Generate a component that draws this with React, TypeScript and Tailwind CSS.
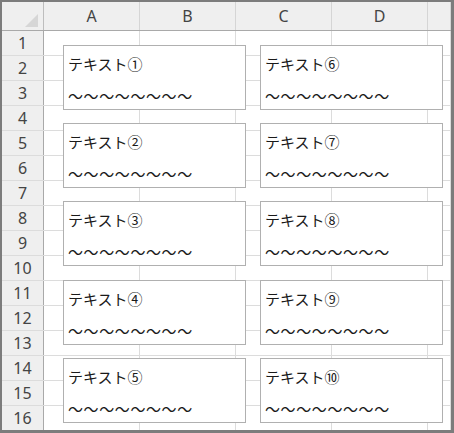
import React from "react";

const cols = ["A", "B", "C", "D", ""];
const rows = Array.from({ length: 16 }, (_, i) => i + 1);

const left = ["①", "②", "③", "④", "⑤"];
const right = ["⑥", "⑦", "⑧", "⑨", "⑩"];
const tops = [45, 123, 201, 280, 358];

function Box({ x, y, label }: { x: number; y: number; label: string }) {
  return (
    <div
      className="absolute w-[183px] h-[65px] bg-white border border-[#b0b0b0] pl-[4px] flex flex-col text-[15px] text-[#1a1a1a] leading-none"
      style={{ left: x, top: y, fontFamily: '"Noto Sans CJK JP", sans-serif' }}
    >
      <div className="mt-[8px] h-[18px] flex items-center">テキスト{label}</div>
      <div className="mt-[14px] h-[18px] flex items-center tracking-[0.6px]">〜〜〜〜〜〜〜〜</div>
    </div>
  );
}

export default function App() {
  return (
    <div className="w-[454px] h-[433px] bg-white">
      <div className="relative w-[454px] h-[433px] border-t-2 border-l-2 border-r-[3px] border-b-[3px] border-[#7c7c7c] overflow-hidden bg-white">
        <div className="flex h-[29px] border-b border-[#a9a9a9] bg-[#efefef]">
          <div className="relative w-[42px] shrink-0 border-r border-[#bdbdbd]">
            <div className="absolute right-[5px] bottom-[3px] w-0 h-0 border-l-[13px] border-l-transparent border-b-[13px] border-b-[#d6d6d6]" />
          </div>
          {cols.map((c, i) => (
            <div
              key={i}
              className={`${i < 4 ? "w-[96px]" : "flex-1"} shrink-0 border-r border-[#d5d5d5] flex items-center justify-center text-[16px] text-[#444444]`}
              style={{ fontFamily: '"Noto Sans", sans-serif' }}
            >
              {c}
            </div>
          ))}
        </div>
        {rows.map((r) => (
          <div key={r} className="flex h-[25px] border-b border-[#dcdcdc]">
            <div
              className="w-[42px] shrink-0 border-r border-[#a9a9a9] bg-[#efefef] flex items-center justify-center text-[16px] text-[#444444]"
              style={{ fontFamily: '"Noto Sans", sans-serif' }}
            >
              {r}
            </div>
            {cols.map((_, i) => (
              <div
                key={i}
                className={`${i < 4 ? "w-[96px]" : "flex-1"} shrink-0 border-r border-[#dcdcdc]`}
              />
            ))}
          </div>
        ))}
        {tops.map((t, i) => (
          <Box key={"l" + i} x={61} y={t - 2} label={left[i]} />
        ))}
        {tops.map((t, i) => (
          <Box key={"r" + i} x={258} y={t - 2} label={right[i]} />
        ))}
      </div>
    </div>
  );
}
